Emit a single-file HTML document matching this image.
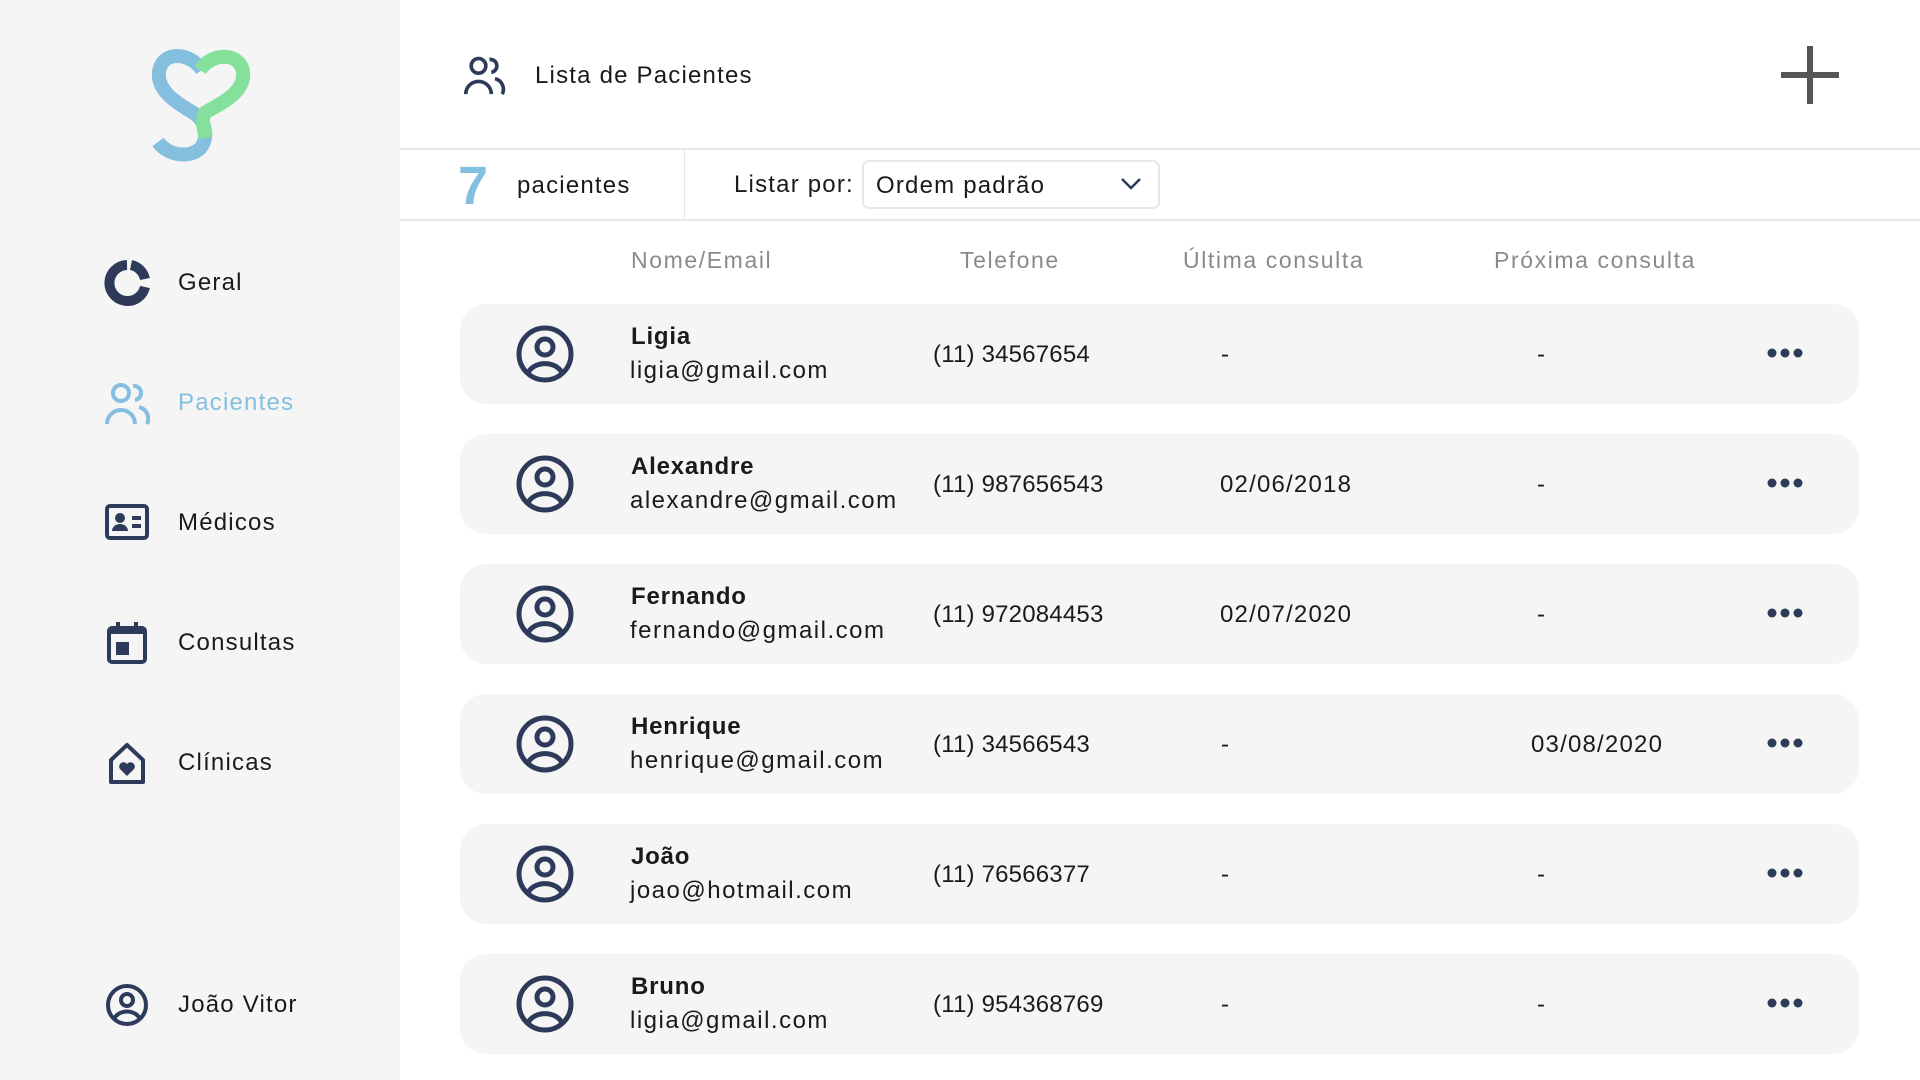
<!DOCTYPE html>
<html><head><meta charset="utf-8"><style>
*{margin:0;padding:0;box-sizing:border-box}
body{width:1920px;height:1080px;background:#fff;font-family:"Liberation Sans",sans-serif;color:#1a1a1a;position:relative;overflow:hidden;letter-spacing:1.2px}
.side{position:absolute;left:0;top:0;width:400px;height:1080px;background:#f5f5f5}
.nav{position:absolute;left:104px;display:flex;align-items:center;font-size:24px}
.nav svg{width:46px;height:46px;margin-right:28px}
.abs{position:absolute}
.row{position:absolute;left:460px;width:1399px;height:100px;background:#f5f5f5;border-radius:26px}
.row .av{position:absolute;left:56px;top:21px}
.row .n{position:absolute;left:171px;top:19px;font-size:24px;font-weight:bold;letter-spacing:0.8px}
.row .e{position:absolute;left:170px;top:53px;font-size:24px;letter-spacing:1.5px}
.row .c{position:absolute;top:37px;font-size:24px}
.row .p{letter-spacing:0.2px}
.dots{position:absolute;left:1307px;top:44px}
.hd{position:absolute;top:247px;font-size:23px;color:#8a8a8a;letter-spacing:1.6px}
</style></head><body>
<div class="side">
<svg class="abs" style="left:140px;top:40px" width="120" height="130" viewBox="0 0 120 130" fill="none" stroke-width="14">
<path d="M62 30 C50 12 22 10 19 32 C17 50 35 62 52 72 C66 80 68 96 62 106 C54 118 30 118 18 102" stroke="#85bfdf"/>
<path d="M60 30 C72 12 100 12 103 32 C105 50 88 60 66 72 C62 76 62 84 66 98" stroke="#85e09c"/>
</svg>
<div class="nav" style="top:260px"><svg viewBox="0 0 46 46"><path d="M23 5 A18 18 0 1 0 41 27" stroke="#2d3a5a" stroke-width="10" fill="none"/><path d="M27 5 A18 18 0 0 1 41 19" stroke="#2d3a5a" stroke-width="10" fill="none"/></svg><span>Geral</span></div>
<div class="nav" style="top:380px;color:#85bfdf"><svg viewBox="0 0 46 46" fill="none" stroke="#85bfdf" stroke-width="4"><circle cx="17" cy="13" r="8"/><path d="M3 44 A14 14 0 0 1 31 44"/><path d="M29 6 A7 7 0 0 1 31 20"/><path d="M35 27 A12 12 0 0 1 43 44"/></svg><span>Pacientes</span></div>
<div class="nav" style="top:500px"><svg viewBox="0 0 46 46"><rect x="3" y="6" width="40" height="32" rx="3" stroke="#2d3a5a" stroke-width="4" fill="none"/><circle cx="16" cy="18" r="5" fill="#2d3a5a"/><path d="M8 31 A8 7 0 0 1 24 31Z" fill="#2d3a5a"/><rect x="28" y="16" width="9" height="4" fill="#2d3a5a"/><rect x="28" y="24" width="9" height="4" fill="#2d3a5a"/></svg><span>Médicos</span></div>
<div class="nav" style="top:620px"><svg viewBox="0 0 46 46"><rect x="5" y="8" width="36" height="34" rx="3" stroke="#2d3a5a" stroke-width="4" fill="none"/><rect x="5" y="8" width="36" height="6" fill="#2d3a5a"/><rect x="12" y="2" width="4" height="8" fill="#2d3a5a"/><rect x="30" y="2" width="4" height="8" fill="#2d3a5a"/><rect x="12" y="22" width="13" height="13" fill="#2d3a5a"/></svg><span>Consultas</span></div>
<div class="nav" style="top:740px"><svg viewBox="0 0 46 46"><path d="M7 20 L23 5 L39 20 V42 H7Z" stroke="#2d3a5a" stroke-width="4" fill="none" stroke-linejoin="round"/><path d="M23 36 L16 29 A4 4 0 0 1 23 24 A4 4 0 0 1 30 29Z" fill="#2d3a5a"/></svg><span>Clínicas</span></div>
<div class="nav" style="top:982px"><svg viewBox="0 0 46 46" fill="none" stroke="#2d3a5a" stroke-width="4"><circle cx="23" cy="23" r="19"/><circle cx="23" cy="18" r="6"/><path d="M10 37 A14 12 0 0 1 36 37"/></svg><span>João Vitor</span></div>
</div>

<svg class="abs" style="left:462px;top:54px" width="44" height="42" viewBox="0 0 46 46" fill="none" stroke="#2d3a5a" stroke-width="4"><circle cx="17" cy="13" r="8"/><path d="M3 44 A14 14 0 0 1 31 44"/><path d="M29 6 A7 7 0 0 1 31 20"/><path d="M35 27 A12 12 0 0 1 43 44"/></svg>
<div class="abs" style="left:535px;top:62px;font-size:24px">Lista de Pacientes</div>
<div class="abs" style="left:1781px;top:46px;width:58px;height:58px">
<div class="abs" style="left:26px;top:0;width:6px;height:58px;background:#555"></div>
<div class="abs" style="left:0;top:26px;width:58px;height:6px;background:#555"></div></div>
<div class="abs" style="left:400px;top:148px;width:1520px;height:2px;background:#e8e8e8"></div>
<div class="abs" style="left:400px;top:219px;width:1520px;height:2px;background:#e8e8e8"></div>
<div class="abs" style="left:684px;top:150px;width:1px;height:69px;background:#e8e8e8"></div>
<div class="abs" style="left:458px;top:155px;font-size:54px;font-weight:900;color:#85bfdf">7</div>
<div class="abs" style="left:517px;top:172px;font-size:24px">pacientes</div>
<div class="abs" style="left:734px;top:171px;font-size:24px">Listar por:</div>
<div class="abs" style="left:862px;top:160px;width:298px;height:49px;border:2px solid #e8e8e8;border-radius:7px;background:#fff"></div>
<div class="abs" style="left:876px;top:172px;font-size:24px">Ordem padrão</div>
<svg class="abs" style="left:1120px;top:177px" width="22" height="14" viewBox="0 0 22 14"><path d="M2 2 L11 11 L20 2" stroke="#2d3a5a" stroke-width="2.5" fill="none"/></svg>
<div class="hd" style="left:631px">Nome/Email</div>
<div class="hd" style="left:960px">Telefone</div>
<div class="hd" style="left:1183px">Última consulta</div>
<div class="hd" style="left:1494px">Próxima consulta</div>

<div id="rows"></div>
<script>
var d=[["Ligia","ligia@gmail.com","(11) 34567654","-","-"],["Alexandre","alexandre@gmail.com","(11) 987656543","02/06/2018","-"],["Fernando","fernando@gmail.com","(11) 972084453","02/07/2020","-"],["Henrique","henrique@gmail.com","(11) 34566543","-","03/08/2020"],["João","joao@hotmail.com","(11) 76566377","-","-"],["Bruno","ligia@gmail.com","(11) 954368769","-","-"]];
var h="";d.forEach(function(r,i){var t=304+i*130;
h+='<div class="row" style="top:'+t+'px"><svg class="av" width="58" height="58" viewBox="0 0 58 58" fill="none" stroke="#2d3a5a" stroke-width="5"><circle cx="29" cy="29" r="26"/><circle cx="29" cy="22" r="8"/><path d="M12 48 A18 14 0 0 1 46 48"/></svg>'+
'<div class="n">'+r[0]+'</div><div class="e">'+r[1]+'</div><div class="c p" style="left:473px">'+r[2]+'</div>'+
'<div class="c" style="left:'+(r[3]=="-"?761:760)+'px">'+r[3]+'</div><div class="c" style="left:'+(r[4]=="-"?1077:1071)+'px">'+r[4]+'</div>'+
'<svg class="dots" width="36" height="10" viewBox="0 0 36 10" fill="#2d3a5a"><circle cx="5" cy="5" r="4.5"/><circle cx="18" cy="5" r="4.5"/><circle cx="31" cy="5" r="4.5"/></svg></div>';});
document.getElementById("rows").innerHTML=h;
</script>
</body></html>
